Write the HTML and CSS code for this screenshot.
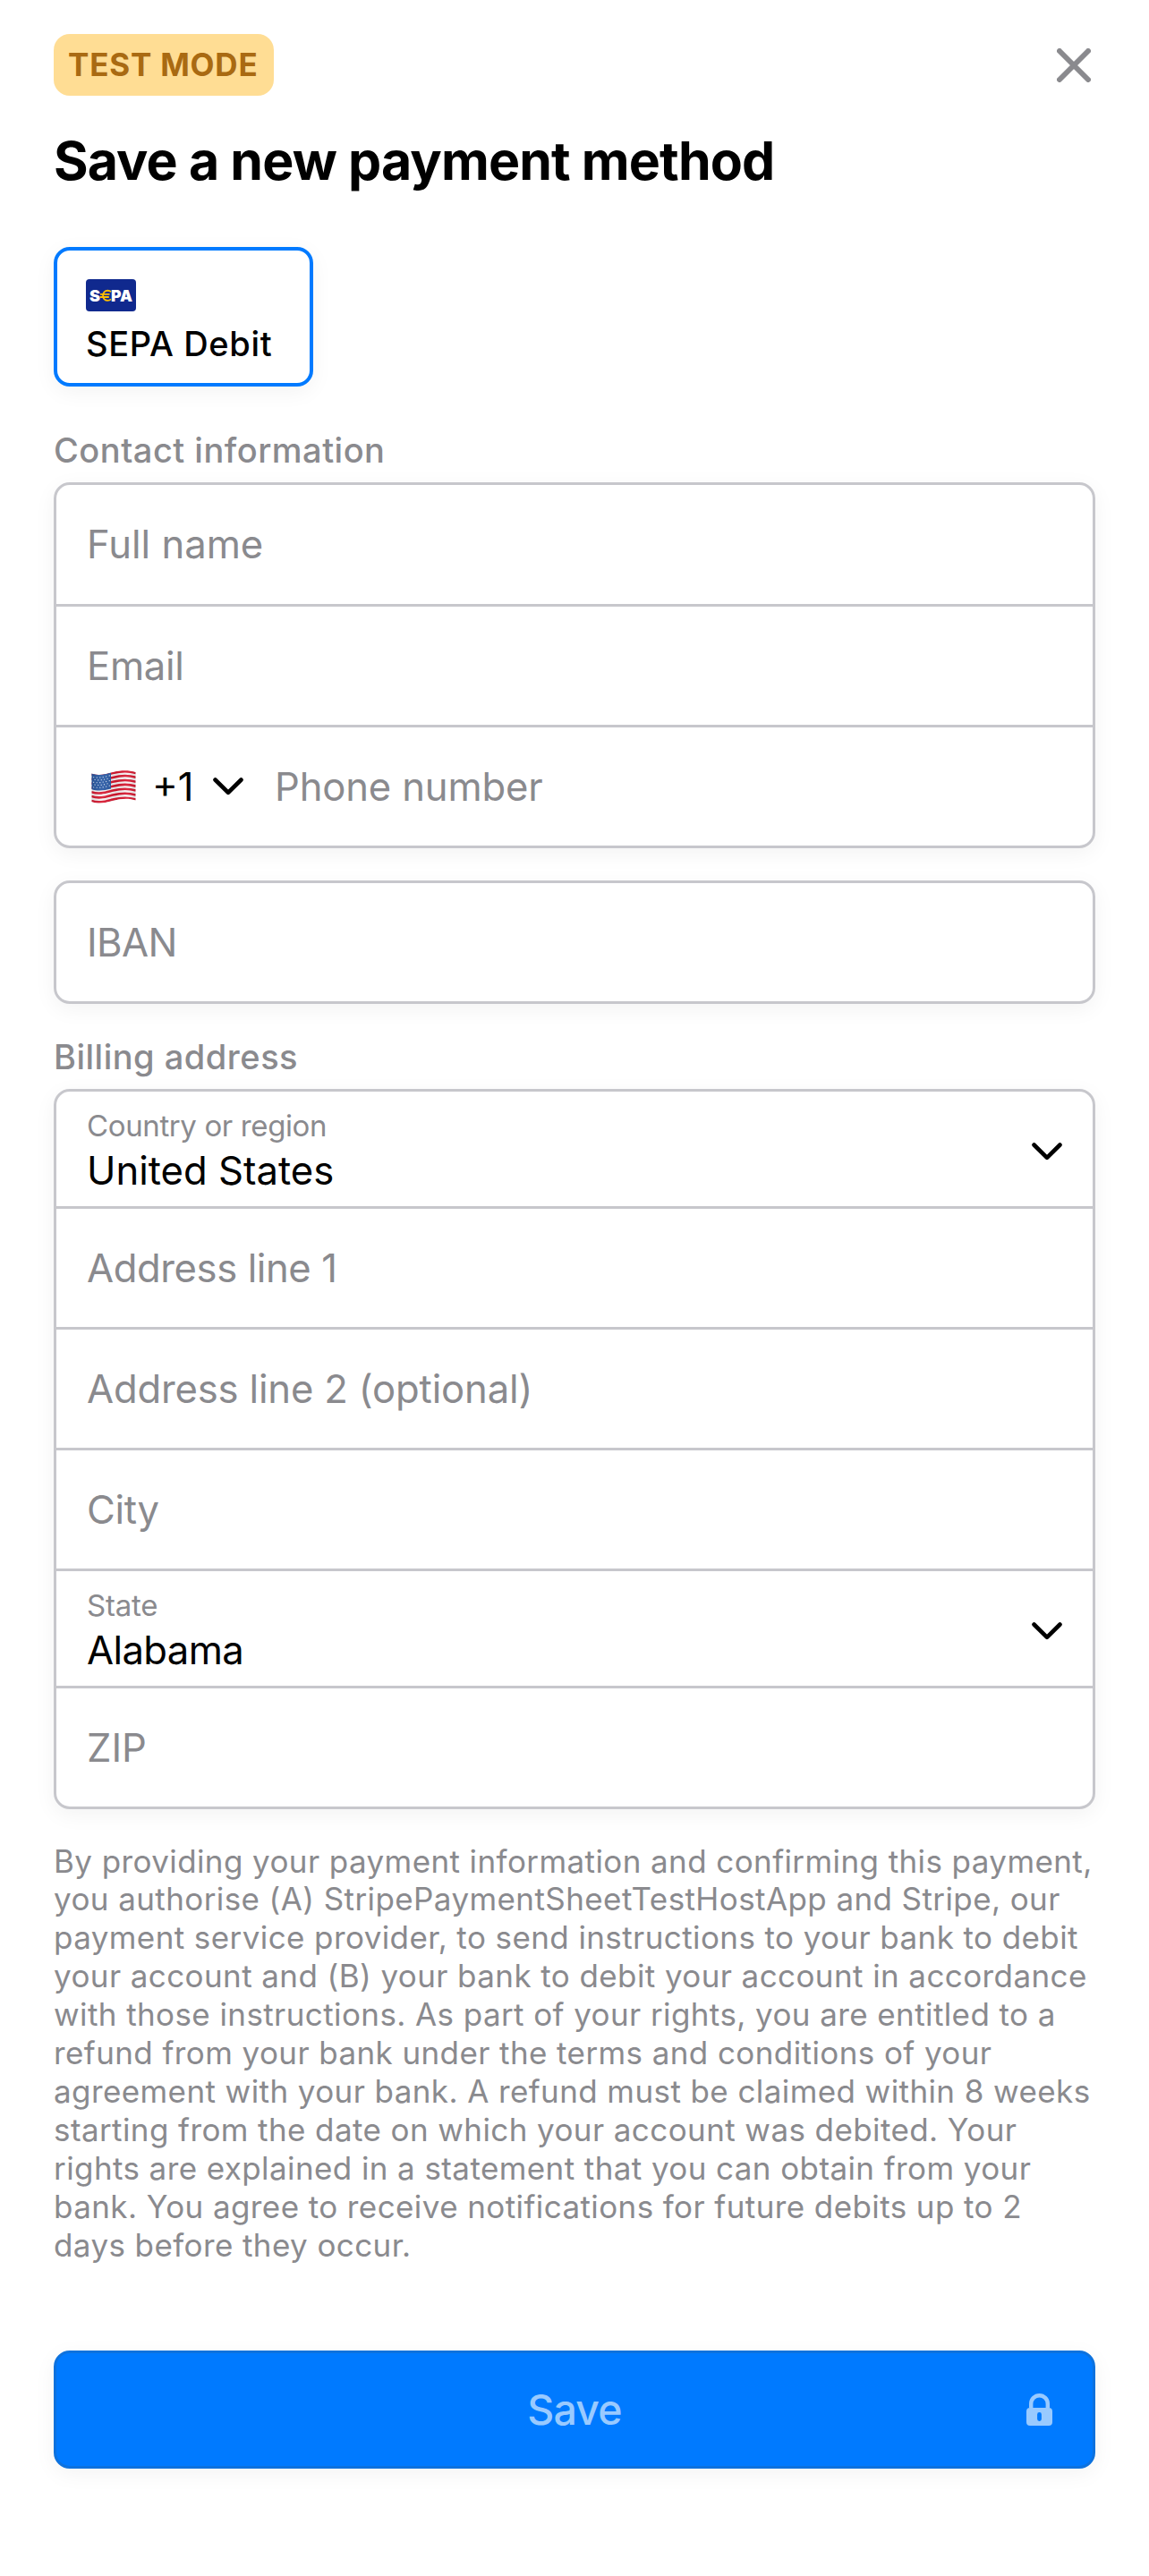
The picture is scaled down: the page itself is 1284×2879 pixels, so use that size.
FILE: index.html
```html
<!DOCTYPE html>
<html lang="en">
<head>
<meta charset="utf-8">
<title>Save a new payment method</title>
<link rel="stylesheet" href="styles.css">
</head>
<body>
<main class="sheet">
  <header class="topbar">
    <span class="badge">TEST MODE</span>
    <button class="close" aria-label="Close">
      <svg width="38" height="38" viewBox="0 0 38 38" fill="none" stroke="#8a8a8e" stroke-width="6" stroke-linecap="round"><path d="M3 3l32 32M35 3L3 35"/></svg>
    </button>
  </header>
  <h1 class="title">Save a new payment method</h1>

  <div class="method">
    <svg class="method-logo" width="56" height="36" viewBox="0 0 56 36">
      <rect width="56" height="36" rx="4" fill="#10298e"/>
      <g font-family="Inter, sans-serif" font-weight="900" font-size="17">
        <text x="4" y="24.5" fill="#fff" textLength="12" lengthAdjust="spacingAndGlyphs">S</text>
        <text x="28" y="24.5" fill="#fff" textLength="24" lengthAdjust="spacingAndGlyphs">PA</text>
      </g>
      <path d="M28 14.2c-1-1-2.200-1.500-3.600-1.500-3.200 0-5.300 2.500-5.300 5.600s2.100 5.600 5.300 5.600c1.400 0 2.600-.5 3.600-1.500M16 16.900h10.600M15.600 20h10.200" fill="none" stroke="#ffbe00" stroke-width="1.900"/>
    </svg>
    <span class="method-name">SEPA Debit</span>
  </div>

  <h2 class="label label-contact">Contact information</h2>
  <section class="group">
    <div class="row row-first"><span class="ph ph-name">Full name</span></div>
    <div class="row"><span class="ph ph-email">Email</span></div>
    <div class="row">
      <div class="dial">
        <svg class="flag" width="50" height="37" viewBox="0 0 50 37">
          <defs>
            <clipPath id="wave"><path d="M0.500 3.500C9 6.500 16 4 24 2S42 -.5 49.500 2V33.500C42 31 34 31.500 26 33.700S8 38 .5 35.300Z"/></clipPath>
            <linearGradient id="shade" x1="0" x2="1" y1="0" y2="0"><stop offset="0" stop-color="#000" stop-opacity=".12"/><stop offset=".25" stop-color="#fff" stop-opacity=".08"/><stop offset=".55" stop-color="#000" stop-opacity=".08"/><stop offset=".8" stop-color="#fff" stop-opacity=".08"/><stop offset="1" stop-color="#000" stop-opacity=".12"/></linearGradient>
          </defs>
          <g clip-path="url(#wave)">
            <rect width="50" height="37" fill="#f7f3f4"/>
            <g fill="none" stroke="#d7172f" stroke-width="2.550">
              <path d="M0 4.500C9 7.500 16 5 24 3S42 .5 50 3"/>
              <path d="M0 9.400C9 12.400 16 9.900 24 7.900S42 5.400 50 7.900"/>
              <path d="M0 14.300C9 17.300 16 14.800 24 12.800S42 10.300 50 12.800"/>
              <path d="M0 19.200C9 22.200 16 19.700 24 17.700S42 15.200 50 17.700"/>
              <path d="M0 24.100C9 27.100 16 24.600 24 22.600S42 20.100 50 22.600"/>
              <path d="M0 29C9 32 16 29.500 24 27.500S42 25 50 27.500"/>
              <path d="M0 34C9 37 16 34.500 24 32.500S42 30 50 32.500"/>
            </g>
            <path d="M0 3C8 6 14 4.600 22 2.500V20.500C14 22.500 8 23.500 0 21Z" fill="#2858a3"/>
            <g fill="none" stroke="#c8d8ec" stroke-width="1.100" stroke-dasharray="1.200 2.400">
              <path d="M2 7.500C9 9 14 7.500 21 5.800"/><path d="M3.500 10.300C9 11.800 14 10.300 21 8.600"/>
              <path d="M2 13.100C9 14.600 14 13.100 21 11.400"/><path d="M3.500 15.900C9 17.400 14 15.900 21 14.200"/>
              <path d="M2 18.700C9 20.200 14 18.700 21 17"/>
            </g>
            <rect width="50" height="37" fill="url(#shade)"/>
          </g>
        </svg>
        <span class="code">+1</span>
        <svg class="chev" width="34" height="20" viewBox="0 0 34 20" fill="none" stroke="#000" stroke-width="4.600" stroke-linecap="round" stroke-linejoin="round"><path d="M2.500 2.500L17 16.800 31.500 2.500"/></svg>
      </div>
      <span class="ph ph-phone">Phone number</span>
    </div>
  </section>

  <section class="group group-iban">
    <div class="row"><span class="ph ph-iban">IBAN</span></div>
  </section>

  <h2 class="label label-billing">Billing address</h2>
  <section class="group">
    <div class="row select">
      <div class="select-text"><span class="caption cap-country">Country or region</span><span class="value val-country">United States</span></div>
      <svg class="chev" width="34" height="20" viewBox="0 0 34 20" fill="none" stroke="#000" stroke-width="4.600" stroke-linecap="round" stroke-linejoin="round"><path d="M2.500 2.500L17 16.800 31.500 2.500"/></svg>
    </div>
    <div class="row"><span class="ph ph-line1">Address line 1</span></div>
    <div class="row"><span class="ph ph-line2">Address line 2 (optional)</span></div>
    <div class="row"><span class="ph ph-city">City</span></div>
    <div class="row select">
      <div class="select-text"><span class="caption cap-state">State</span><span class="value val-state">Alabama</span></div>
      <svg class="chev" width="34" height="20" viewBox="0 0 34 20" fill="none" stroke="#000" stroke-width="4.600" stroke-linecap="round" stroke-linejoin="round"><path d="M2.500 2.500L17 16.800 31.500 2.500"/></svg>
    </div>
    <div class="row"><span class="ph ph-zip">ZIP</span></div>
  </section>

  <p class="legal">By providing your payment information and confirming this payment,<br>you authorise (A) StripePaymentSheetTestHostApp and Stripe, our<br>payment service provider, to send instructions to your bank to debit<br>your account and (B) your bank to debit your account in accordance<br>with those instructions. As part of your rights, you are entitled to a<br>refund from your bank under the terms and conditions of your<br>agreement with your bank. A refund must be claimed within 8 weeks<br>starting from the date on which your account was debited. Your<br>rights are explained in a statement that you can obtain from your<br>bank. You agree to receive notifications for future debits up to 2<br>days before they occur.</p>

  <button class="save">
    <span></span>
    <span class="save-label">Save</span>
    <svg class="lock" width="29" height="36" viewBox="0 0 29 36">
      <path d="M5.200 16V11.500a9.300 9.300 0 0 1 18.600 0V16" fill="none" stroke="#99caff" stroke-width="4.400"/>
      <path fill-rule="evenodd" fill="#99caff" d="M4 16H25a4 4 0 0 1 4 4V32a4 4 0 0 1-4 4H4a4 4 0 0 1-4-4V20a4 4 0 0 1 4-4ZM14.500 21a2.400 2.400 0 0 0-2.400 2.400V28.600a2.400 2.400 0 0 0 4.800 0V23.400A2.400 2.400 0 0 0 14.500 21Z"/>
    </svg>
  </button>
</main>
</body>
</html>
```
FILE: styles.css
```css
* { box-sizing: border-box; }
body {
  margin: 0;
  background: #fff;
  color: #000;
  font-family: Inter, "Liberation Sans", sans-serif;
}
button { font: inherit; border: 0; background: none; padding: 0; }
.sheet {
  width: 1284px;
  height: 2879px;
  padding: 38px 60px 0;
  background: #fff;
}
.topbar {
  display: flex;
  align-items: center;
  justify-content: space-between;
  height: 69px;
}
.badge {
  width: 246px;
  height: 69px;
  padding-left: 16px;
  border-radius: 18px;
  background: #ffdd94;
  color: #a96a12;
  font-size: 35px;
  font-weight: 700;
  letter-spacing: .8px;
  line-height: 69px;
  white-space: nowrap;
}
.close { display: flex; margin-right: 5px; }
.title {
  margin: 37px 0 0;
  height: 72px;
  font-size: 59px;
  font-weight: 700;
  letter-spacing: -.88px;
  line-height: 72px;
  white-space: nowrap;
}
.method {
  display: flex;
  flex-direction: column;
  width: 290px;
  height: 156px;
  margin-top: 60px;
  padding: 32px 0 0 32px;
  border: 4.500px solid #007aff;
  border-radius: 18px;
  box-shadow: 0 6px 24px rgba(0, 0, 0, .05);
}
.method-name {
  margin-top: 13px;
  font-size: 38px;
  font-weight: 500;
  letter-spacing: .65px;
  line-height: 46px;
  white-space: nowrap;
}
.label {
  margin: 0;
  height: 48px;
  color: #8a8a8e;
  font-size: 38px;
  font-weight: 500;
  letter-spacing: .5px;
  line-height: 48px;
}
.label-contact { margin-top: 47px; margin-bottom: 12px; }
.label-billing { margin-top: 35px; margin-bottom: 12px; }
.group {
  border: 3px solid #c7c7cc;
  border-radius: 18px;
  box-shadow: 0 6px 24px rgba(0, 0, 0, .05);
}
.group-iban { margin-top: 36px; }
.row {
  display: flex;
  align-items: center;
  box-sizing: content-box;
  height: 132px;
  padding: 0 34px;
  white-space: nowrap;
}
.row-first { height: 133px; }
.row + .row { border-top: 3px solid #c7c7cc; }
.ph { color: #8a8a8e; font-size: 43.600px; }
.ph-email, .ph-city { letter-spacing: -.3px; }
.ph-phone, .ph-line2 { letter-spacing: -.16px; }
.ph-iban { letter-spacing: -.6px; }
.ph-line1 { letter-spacing: -.4px; }
.dial { display: flex; align-items: center; width: 210px; padding-left: 5px; }
.code { width: 67px; margin-left: 18px; margin-right: 1px; font-size: 43.600px; }
.row.select { height: 128px; justify-content: space-between; }
.row.select .chev { margin-top: 5px; }
.select-text { display: flex; flex-direction: column; padding-top: 6px; }
.caption { color: #8a8a8e; font-size: 33px; line-height: 40px; }
.cap-country { letter-spacing: -.38px; }
.cap-state { letter-spacing: -.2px; }
.value { margin-top: 3.500px; font-size: 43.600px; line-height: 54px; }
.val-state { letter-spacing: -.6px; }
.legal {
  margin: 36.500px 0 0;
  height: 472px;
  color: #8a8a8e;
  font-size: 35px;
  letter-spacing: .405px;
  line-height: 42.900px;
  white-space: nowrap;
}
.save {
  display: grid;
  grid-template-columns: 1fr auto 1fr;
  align-items: center;
  width: 100%;
  height: 132px;
  margin-top: 96.500px;
  border: 3px solid #0d72de;
  border-radius: 18px;
  background: #007aff;
  box-shadow: 0 6px 24px rgba(0, 0, 0, .05);
}
.save-label { color: #99caff; font-size: 46.500px; font-weight: 500; letter-spacing: -.9px; }
.lock { justify-self: end; margin-right: 45px; }
```
